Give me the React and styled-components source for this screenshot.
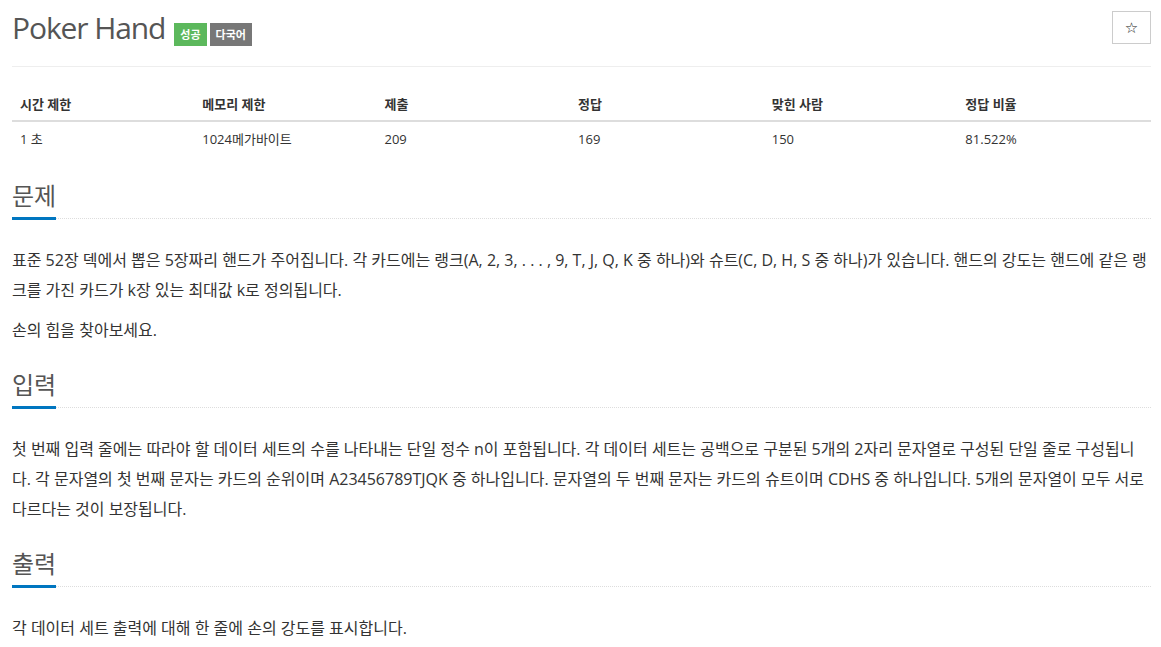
import React from 'react'
import styled, { createGlobalStyle } from 'styled-components'

const GlobalStyle = createGlobalStyle`
  html, body {
    margin: 0;
    padding: 0;
    background: #fff;
  }
  body {
    font-family: "Open Sans", "Noto Sans CJK KR", sans-serif;
    color: #333;
    font-size: 14px;
  }
  * { box-sizing: border-box; }
`

const Page = styled.div`
  padding: 0 10px 0 12px;
`

const Header = styled.div`
  display: flex;
  align-items: flex-start;
  padding-top: 11px;
  padding-bottom: 20px;
  border-bottom: 1px solid #eee;
`

const Title = styled.h1`
  flex: 1;
  margin: 0;
  font-size: 30px;
  font-weight: 400;
  line-height: 33px;
  color: #555;
  display: flex;
  align-items: baseline;
  gap: 3px;
`

const TitleText = styled.span`
  letter-spacing: -1.1px;
  margin-right: 6px;
`

const Badge = styled.span`
  display: inline-block;
  font-size: 11px;
  font-weight: 700;
  line-height: 23px;
  height: 23px;
  padding: 0 6px;
  color: #fff;
  background: ${p => p.$color};
`

const StarButton = styled.button`
  width: 39px;
  height: 33px;
  border: 1px solid #ccc;
  background: #fff;
  border-radius: 0;
  font-family: "DejaVu Sans", sans-serif;
  font-size: 15px;
  color: #222;
  padding: 0;
  cursor: pointer;
`

const Table = styled.table`
  width: 100%;
  border-collapse: collapse;
  margin: 20px 0 18px;
  font-size: 13px;
  line-height: 18px;
`

const Th = styled.th`
  text-align: left;
  font-weight: 700;
  padding: 8px 8px 7px;
  border-bottom: 2px solid #ddd;
  width: ${p => p.$w};
`

const Td = styled.td`
  padding: 8px;
`

const Section = styled.section`
  margin-top: 27px;
`

const Headline = styled.div`
  border-bottom: 1px dotted #ddd;
  margin-bottom: 26px;
`

const SectionTitle = styled.h2`
  display: inline-block;
  margin: 0 0 -2px;
  font-size: 24px;
  font-weight: 400;
  line-height: 26px;
  color: #555;
  padding-bottom: 8px;
  border-bottom: 3px solid #0076c0;
`

const Text = styled.p`
  margin: 0 0 10px;
  font-size: 16px;
  line-height: 30px;
  font-feature-settings: "palt";
`

const stats = [
  ['시간 제한', '1 초', '16%'],
  ['메모리 제한', '1024메가바이트', '16%'],
  ['제출', '209', '17%'],
  ['정답', '169', '17%'],
  ['맞힌 사람', '150', '17%'],
  ['정답 비율', '81.522%', '17%'],
]

export default function App() {
  return (
    <Page>
      <GlobalStyle />
      <Header>
        <Title>
          <TitleText>Poker Hand</TitleText>
          <Badge $color="#5cb85c">성공</Badge>
          <Badge $color="#777">다국어</Badge>
        </Title>
        <StarButton>☆</StarButton>
      </Header>

      <Table>
        <thead>
          <tr>
            {stats.map(s => <Th key={s[0]} $w={s[2]}>{s[0]}</Th>)}
          </tr>
        </thead>
        <tbody>
          <tr>
            {stats.map(s => <Td key={s[0]}>{s[1]}</Td>)}
          </tr>
        </tbody>
      </Table>

      <Section>
        <Headline><SectionTitle>문제</SectionTitle></Headline>
        <Text>표준 52장 덱에서 뽑은 5장짜리 핸드가 주어집니다. 각 카드에는 랭크(A, 2, 3, . . . , 9, T, J, Q, K 중 하나)와 슈트(C, D, H, S 중 하나)가 있습니다. 핸드의 강도는 핸드에 같은 랭크를 가진 카드가 k장 있는 최대값 k로 정의됩니다.</Text>
        <Text>손의 힘을 찾아보세요.</Text>
      </Section>

      <Section>
        <Headline><SectionTitle>입력</SectionTitle></Headline>
        <Text>첫 번째 입력 줄에는 따라야 할 데이터 세트의 수를 나타내는 단일 정수 n이 포함됩니다. 각 데이터 세트는 공백으로 구분된 5개의 2자리 문자열로 구성된 단일 줄로 구성됩니다. 각 문자열의 첫 번째 문자는 카드의 순위이며 A23456789TJQK 중 하나입니다. 문자열의 두 번째 문자는 카드의 슈트이며 CDHS 중 하나입니다. 5개의 문자열이 모두 서로 다르다는 것이 보장됩니다.</Text>
      </Section>

      <Section>
        <Headline><SectionTitle>출력</SectionTitle></Headline>
        <Text>각 데이터 세트 출력에 대해 한 줄에 손의 강도를 표시합니다.</Text>
      </Section>
    </Page>
  )
}
